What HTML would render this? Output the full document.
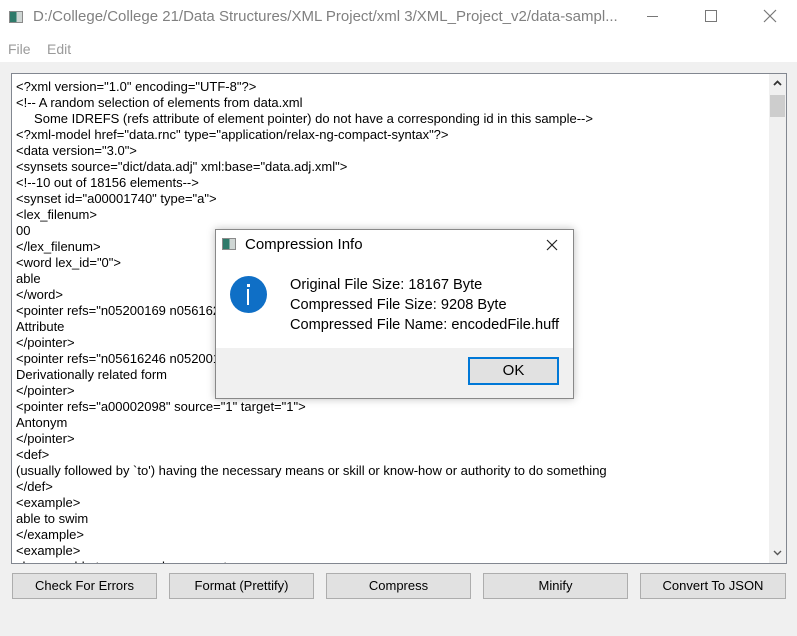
<!DOCTYPE html>
<html><head><meta charset="utf-8"><style>
*{margin:0;padding:0;box-sizing:border-box}
body{width:797px;height:636px;background:#f0f0f0;font-family:"Liberation Sans",sans-serif;position:relative;overflow:hidden}
.title{position:absolute;left:0;top:0;width:797px;height:36px;background:#fff}
.title .t{position:absolute;left:33px;top:8px;font-size:15px;color:#808080}
.menu{position:absolute;left:0;top:36px;width:797px;height:26px;background:#fff;font-size:14px;color:#9a9a9a}
.ed{position:absolute;left:11px;top:73px;width:776px;height:491px;background:#fff;border:1px solid #828790;overflow:hidden}
.ed pre{position:absolute;left:4px;top:5px;font-family:"Liberation Sans",sans-serif;font-size:13px;line-height:16px;color:#000;white-space:pre}
.sb{position:absolute;right:0;top:0;width:17px;height:489px;background:#f0f0f0}
.btn{position:absolute;top:573px;height:26px;background:#e1e1e1;border:1px solid #adadad;font-size:13px;text-align:center;line-height:24px;color:#000}
.dlg{position:absolute;left:215px;top:229px;width:359px;height:170px;background:#f0f0f0;border:1px solid #888;box-shadow:0 0 8px rgba(0,0,0,.25)}
.dlg .body{position:absolute;left:0;top:0;width:357px;height:118px;background:#fff}
.icon{display:inline-block;width:14px;height:12px;border:1px solid #8a8a8a;background:linear-gradient(90deg,#2e7a6a 0 55%,#cfd6d4 55%)}
</style></head><body>
<div class="title"><span class="icon" style="position:absolute;left:9px;top:11px"></span><span class="t">D:/College/College 21/Data Structures/XML Project/xml 3/XML_Project_v2/data-sampl...</span>
<div style="position:absolute;left:647px;top:16px;width:11px;height:1px;background:#777"></div>
<div style="position:absolute;left:705px;top:10px;width:12px;height:12px;border:1px solid #777"></div>
<svg style="position:absolute;left:763px;top:9px" width="14" height="14"><path d="M1 1L13 13M13 1L1 13" stroke="#777" stroke-width="1.2"/></svg>
</div>
<div class="menu"><span style="position:absolute;left:8px;top:5px">File</span><span style="position:absolute;left:47px;top:5px">Edit</span></div>
<div class="ed"><pre>&lt;?xml version="1.0" encoding="UTF-8"?&gt;
&lt;!-- A random selection of elements from data.xml
     Some IDREFS (refs attribute of element pointer) do not have a corresponding id in this sample--&gt;
&lt;?xml-model href="data.rnc" type="application/relax-ng-compact-syntax"?&gt;
&lt;data version="3.0"&gt;
&lt;synsets source="dict/data.adj" xml:base="data.adj.xml"&gt;
&lt;!--10 out of 18156 elements--&gt;
&lt;synset id="a00001740" type="a"&gt;
&lt;lex_filenum&gt;
00
&lt;/lex_filenum&gt;
&lt;word lex_id="0"&gt;
able
&lt;/word&gt;
&lt;pointer refs="n05200169 n05616246" source="1" target="1"&gt;
Attribute
&lt;/pointer&gt;
&lt;pointer refs="n05616246 n05200169" source="1" target="1"&gt;
Derivationally related form
&lt;/pointer&gt;
&lt;pointer refs="a00002098" source="1" target="1"&gt;
Antonym
&lt;/pointer&gt;
&lt;def&gt;
(usually followed by `to') having the necessary means or skill or know-how or authority to do something
&lt;/def&gt;
&lt;example&gt;
able to swim
&lt;/example&gt;
&lt;example&gt;
she was able to program her computer</pre>
<div class="sb">
<svg style="position:absolute;left:4px;top:6px" width="9" height="6"><path d="M1 5L4.5 1.5L8 5" stroke="#333" stroke-width="1.8" fill="none"/></svg>
<div style="position:absolute;left:1px;top:21px;width:15px;height:22px;background:#cdcdcd"></div>
<svg style="position:absolute;left:4px;top:476px" width="9" height="6"><path d="M1 1L4.5 4.5L8 1" stroke="#555" stroke-width="1.4" fill="none"/></svg>
</div></div>
<div class="btn" style="left:12px;width:145px">Check For Errors</div>
<div class="btn" style="left:169px;width:145px">Format (Prettify)</div>
<div class="btn" style="left:326px;width:145px">Compress</div>
<div class="btn" style="left:483px;width:145px">Minify</div>
<div class="btn" style="left:640px;width:146px">Convert To JSON</div>
<div class="dlg"><div class="body">
<span class="icon" style="position:absolute;left:6px;top:8px"></span>
<span style="position:absolute;left:29px;top:6px;font-size:15px;color:#000">Compression Info</span>
<svg style="position:absolute;left:330px;top:9px" width="12" height="12"><path d="M1 1L11 11M11 1L1 11" stroke="#222" stroke-width="1.2"/></svg>
<div style="position:absolute;left:14px;top:46px;width:37px;height:37px;border-radius:50%;background:#0f6fc6"></div>
<div style="position:absolute;left:31px;top:54px;width:3px;height:3px;background:#fff"></div>
<div style="position:absolute;left:31px;top:59px;width:2px;height:16px;background:#fff"></div>
<div style="position:absolute;left:74px;top:45px;font-size:14.6px;line-height:20px;color:#000">Original File Size: 18167 Byte<br>Compressed File Size: 9208 Byte<br>Compressed File Name: encodedFile.huff</div>
</div>
<div style="position:absolute;left:252px;top:127px;width:91px;height:28px;background:#e1e1e1;border:2px solid #0078d7;font-size:15px;text-align:center;line-height:24px">OK</div>
</div>
</body></html>
